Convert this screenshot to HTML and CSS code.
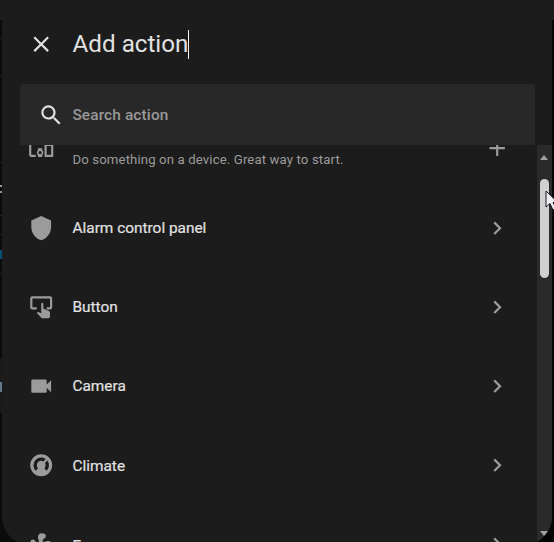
FILE: index.html
```html
<!DOCTYPE html>
<html lang="en">
<head>
<meta charset="utf-8">
<title>Add action</title>
<link rel="stylesheet" href="styles.css">
</head>
<body>
<div class="page">
  <div class="page-top"></div>
  <i class="line l1"></i><i class="line l2"></i><i class="line l3"></i><i class="line l4"></i><i class="line l5"></i><i class="line l6"></i><i class="line l7"></i>
  <i class="mark m1"></i><i class="mark m2"></i><i class="mark m3"></i>
  <main class="dialog">
    <header class="header">
      <svg class="icon" viewBox="0 0 24 24"><path d="M19,6.41L17.59,5L12,10.59L6.41,5L5,6.41L10.59,12L5,17.59L6.41,19L12,13.41L17.59,19L19,17.59L13.41,12L19,6.41Z"/></svg>
      <h1 class="title">Add action</h1><i class="caret"></i>
    </header>
    <div class="search">
      <svg class="icon" viewBox="0 0 24 24"><path d="M9.5,3A6.5,6.5 0 0,1 16,9.5C16,11.11 15.41,12.59 14.44,13.73L14.71,14H15.5L20.5,19L19,20.5L14,15.5V14.71L13.73,14.44C12.59,15.41 11.11,16 9.5,16A6.5,6.5 0 0,1 3,9.5A6.5,6.5 0 0,1 9.5,3M9.5,5C7,5 5,7 5,9.5C5,12 7,14 9.5,14C12,14 14,12 14,9.5C14,7 12,5 9.5,5Z"/></svg>
      <span>Search action</span>
    </div>
    <div class="body">
      <ul class="list">
        <li class="item device">
          <svg class="icon" viewBox="0 0 24 24"><path d="M3 6H21V4H3C1.9 4 1 4.9 1 6V18C1 19.1 1.9 20 3 20H7V18H3V6M13 12H9V13.78C8.39 14.33 8 15.11 8 16C8 16.89 8.39 17.67 9 18.22V20H13V18.22C13.61 17.67 14 16.88 14 16S13.61 14.33 13 13.78V12M11 17.5C10.17 17.5 9.5 16.83 9.5 16S10.17 14.5 11 14.5 12.5 15.17 12.5 16 11.83 17.5 11 17.5M22 8H16C15.5 8 15 8.5 15 9V19C15 19.5 15.5 20 16 20H22C22.5 20 23 19.5 23 19V9C23 8.5 22.5 8 22 8M21 18H17V10H21V18Z"/></svg>
          <div class="text"><small>Do something on a device. Great way to start.</small></div>
          <svg class="icon" viewBox="0 0 24 24"><path d="M19,13H13V19H11V13H5V11H11V5H13V11H19V13Z"/></svg>
        </li>
        <li class="item">
          <svg class="icon" viewBox="0 0 24 24"><path d="M12,1L3,5V11C3,16.55 6.84,21.74 12,23C17.16,21.74 21,16.55 21,11V5L12,1Z"/></svg>
          <div class="text">Alarm control panel</div>
          <svg class="icon" viewBox="0 0 24 24"><path d="M8.59,16.58L13.17,12L8.59,7.41L10,6L16,12L10,18L8.59,16.58Z"/></svg>
        </li>
        <li class="item">
          <svg class="icon" viewBox="0 0 24 24"><path d="M4,2H20A2,2 0 0,1 22,4V12A2,2 0 0,1 20,14H17V12H20V4H4V12H8V14H4A2,2 0 0,1 2,12V4A2,2 0 0,1 4,2M13,8A1,1 0 0,1 14,9V13.5L15.2,13.6L19,15.5C19.5,15.8 20,16.2 20,16.8V20.5C19.9,21.4 19.3,22 18.4,22H13.3C12.8,22 12.4,21.8 12.1,21.5L8,17.3L8.7,16.6C8.9,16.4 9.2,16.3 9.5,16.3L12,17.5V9A1,1 0 0,1 13,8Z"/></svg>
          <div class="text">Button</div>
          <svg class="icon" viewBox="0 0 24 24"><path d="M8.59,16.58L13.17,12L8.59,7.41L10,6L16,12L10,18L8.59,16.58Z"/></svg>
        </li>
        <li class="item">
          <svg class="icon" viewBox="0 0 24 24"><path d="M17,10.5V7A1,1 0 0,0 16,6H4A1,1 0 0,0 3,7V17A1,1 0 0,0 4,18H16A1,1 0 0,0 17,17V13.5L21,17.5V6.5L17,10.5Z"/></svg>
          <div class="text">Camera</div>
          <svg class="icon" viewBox="0 0 24 24"><path d="M8.59,16.58L13.17,12L8.59,7.41L10,6L16,12L10,18L8.59,16.58Z"/></svg>
        </li>
        <li class="item">
          <svg class="icon" viewBox="0 0 24 24"><path d="M16.95,16.95L14.83,14.83C15.55,14.1 16,13.1 16,12C16,11.26 15.79,10.57 15.43,10L17.6,7.81C18.5,9 19,10.43 19,12C19,13.93 18.22,15.68 16.95,16.95M12,5C13.57,5 15,5.5 16.19,6.4L14,8.56C13.43,8.21 12.74,8 12,8A4,4 0 0,0 8,12C8,13.1 8.45,14.1 9.17,14.83L7.05,16.95C5.78,15.68 5,13.93 5,12A7,7 0 0,1 12,5M12,2A10,10 0 0,0 2,12A10,10 0 0,0 12,22A10,10 0 0,0 22,12A10,10 0 0,0 12,2Z"/></svg>
          <div class="text">Climate</div>
          <svg class="icon" viewBox="0 0 24 24"><path d="M8.59,16.58L13.17,12L8.59,7.41L10,6L16,12L10,18L8.59,16.58Z"/></svg>
        </li>
        <li class="item last">
          <svg class="icon" viewBox="0 0 24 24"><path d="M12,11A1,1 0 0,0 11,12A1,1 0 0,0 12,13A1,1 0 0,0 13,12A1,1 0 0,0 12,11M12.5,2C17,2 17.11,5.57 14.75,6.75C13.76,7.24 13.32,8.29 13.13,9.22C13.61,9.42 14.03,9.73 14.35,10.13C18.05,8.13 22.03,8.92 22.03,12.5C22.03,17 18.46,17.1 17.28,14.73C16.78,13.74 15.72,13.3 14.79,13.11C14.59,13.59 14.28,14 13.88,14.34C15.87,18.03 15.08,22 11.5,22C7,22 6.91,18.42 9.27,17.24C10.25,16.75 10.69,15.71 10.89,14.79C10.4,14.59 9.97,14.27 9.65,13.87C5.96,15.85 2,15.07 2,11.5C2,7 5.56,6.89 6.74,9.26C7.24,10.25 8.29,10.68 9.22,10.87C9.41,10.39 9.73,9.97 10.14,9.65C8.15,5.96 8.94,2 12.5,2Z"/></svg>
          <div class="text">Fan</div>
          <svg class="icon" viewBox="0 0 24 24"><path d="M8.59,16.58L13.17,12L8.59,7.41L10,6L16,12L10,18L8.59,16.58Z"/></svg>
        </li>
      </ul>
      <div class="scrollbar"><i class="up"></i><i class="thumb"></i><i class="down"></i></div>
    </div>
  </main>
  <svg class="pointer" viewBox="0 0 14 22"><path d="M1 1V17L5 13.5L8 20L11 18.5L8 12.5H13Z"/></svg>
</div>
</body>
</html>
```
FILE: styles.css
```css
* { box-sizing: border-box; }
body { margin: 0; background: #0b0b0b; overflow: hidden; }
.page {
  position: relative;
  width: 554px;
  height: 542px;
  overflow: hidden;
  font-family: Roboto, sans-serif;
  color: #e1e1e1;
  background: linear-gradient(90deg, #0b0b0b 50%, #030303 50%);
}
.page-top { position: absolute; inset: 0 0 auto; height: 20px; background: #1c1c1c; border-bottom: 1px solid #292929; }
.line { position: absolute; left: 0; width: 2px; height: 1px; background: #242424; }
.l1 { top: 38px; }
.l2 { top: 76px; }
.l3 { top: 162px; }
.l4 { top: 215px; }
.l5 { top: 234px; }
.l6 { top: 273px; }
.l7 { top: 358px; height: 55px; background: #1a1a1a; }
.mark { position: absolute; left: 0; width: 2px; }
.m1 { top: 185px; height: 8px; border: solid #999; border-width: 2px 0; }
.m2 { top: 250px; height: 9px; background: #07506f; }
.m3 { top: 382px; height: 10px; background: #64798a; }
.dialog {
  position: relative;
  display: flex;
  flex-direction: column;
  width: 550px;
  height: 545px;
  margin: 0 2px;
  overflow: hidden;
  background: #1c1c1c;
  border-radius: 0 0 28px 28px;
}
.icon { display: block; flex: none; width: 26.4px; height: 26.4px; fill: currentColor; }
.header { display: flex; flex: none; align-items: center; height: 84px; padding: 4px 0 0 26px; }
.title { margin: 0 0 0 18.2px; font-size: 24.2px; line-height: 30px; font-weight: 400; }
.caret { width: 1px; height: 29px; background: #f4f4f4; }
.search {
  display: flex;
  flex: none;
  align-items: center;
  gap: 8px;
  width: 515px;
  height: 61px;
  margin-left: 18px;
  padding-left: 18px;
  background: #282828;
  border-radius: 4px 4px 0 0;
  font-size: 15.4px;
  font-weight: 500;
  letter-spacing: 0.14px;
  color: #999;
}
.search .icon { margin-top: 1px; color: #e1e1e1; }
.body { display: flex; flex: 1; min-height: 0; overflow: hidden; }
.list { flex: 1; margin: -36px 0 0; padding: 0; list-style: none; }
.item { display: flex; align-items: center; height: 79.25px; padding: 0 27px 0 25.8px; font-size: 15.4px; color: #9b9b9b; }
.last { margin-top: -0.8px; }
.text { flex: 1; margin-left: 18.3px; color: #e1e1e1; -webkit-text-stroke: 0.2px; }
.last .text { padding-top: 3px; }
.device .text { padding-top: 22px; line-height: 18px; -webkit-text-stroke: 0; }
.device small { display: block; font-size: 13.2px; letter-spacing: 0.12px; color: #9b9b9b; }
.scrollbar { position: relative; width: 15px; background: #2a2a2a; }
.scrollbar i { position: absolute; }
.thumb { top: 34px; left: 3px; width: 9px; height: 99px; border-radius: 5px; background: #d1d1d1; }
.up { top: 10px; left: 3px; border: solid transparent; border-width: 0 4.5px 5px; border-bottom-color: #a0a0a0; }
.down { bottom: 9px; left: 3px; border: solid transparent; border-width: 5px 4.5px 0; border-top-color: #a0a0a0; }
.pointer { position: absolute; left: 545px; top: 190px; width: 14px; height: 22px; fill: #eee; stroke: #171724; stroke-width: 1; }
```
